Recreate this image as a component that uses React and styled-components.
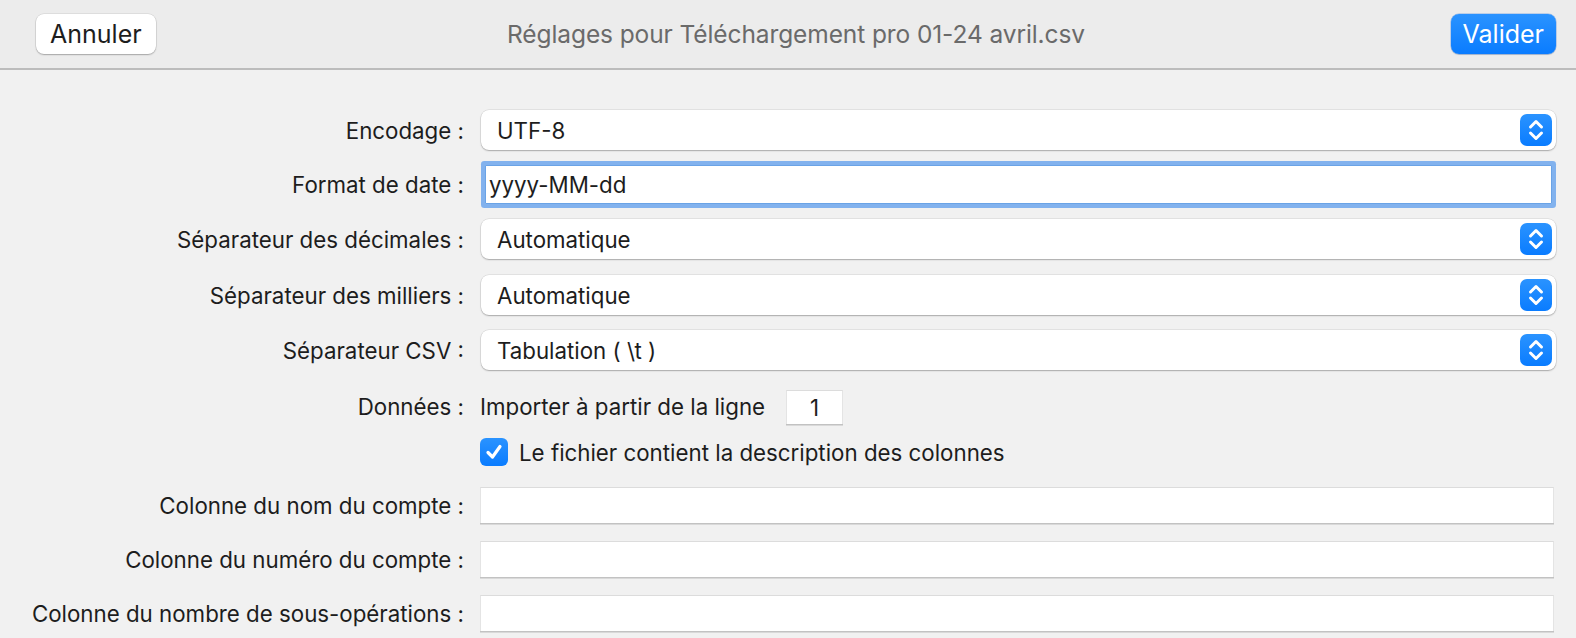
import React from 'react'
import styled, { createGlobalStyle } from 'styled-components'

const GlobalStyle = createGlobalStyle`
  html, body {
    margin: 0;
    padding: 0;
    background: #f1f1f1;
    font-family: Inter, "Noto Sans", "Liberation Sans", sans-serif;
    color: #1d1d1d;
  }
`

const Window = styled.div`
  width: 100%;
  height: 100vh;
  overflow: hidden;
  background: #f1f1f1;
`

const Header = styled.header`
  height: 70px;
  box-sizing: border-box;
  display: grid;
  grid-template-columns: 1fr auto 1fr;
  align-items: center;
  padding: 0 20px 0 36px;
  background: #ececec;
  border-bottom: 2px solid #bcbcbc;
`

const Title = styled.div`
  font-size: 24.5px;
  color: #6a6a6a;
  letter-spacing: -0.1px;
`

const Button = styled.button`
  height: 40px;
  padding: 0 ${p => (p.$primary ? 12 : 14)}px;
  border: none;
  border-radius: 8px;
  font-family: inherit;
  font-size: 25px;
  justify-self: ${p => (p.$primary ? 'end' : 'start')};
  color: ${p => (p.$primary ? '#fff' : '#1d1d1d')};
  background: ${p => (p.$primary ? 'linear-gradient(#2a93ff, #0a7cff)' : '#fff')};
  box-shadow: ${p =>
    p.$primary
      ? '0 0 0 0.5px rgba(0,90,220,0.4), 0 1px 1px rgba(0,0,0,0.15)'
      : '0 0 0 0.5px rgba(0,0,0,0.12), 0 1px 1.5px rgba(0,0,0,0.25)'};
`

const Form = styled.div`
  display: flex;
  flex-direction: column;
  padding: 40px 20px 0 0;
`

const Row = styled.div`
  display: grid;
  grid-template-columns: 464px 1fr;
  column-gap: 16px;
  align-items: center;
  height: ${p => p.$h}px;
  margin-top: ${p => p.$mt || 0}px;
`

const Label = styled.div`
  font-size: 22.3px;
  text-align: right;
  white-space: nowrap;
`

const Select = styled.div`
  height: 40px;
  margin-left: 1px;
  display: flex;
  align-items: center;
  justify-content: space-between;
  padding: 0 4px 0 16px;
  background: #fff;
  border-radius: 8px;
  font-size: 22.3px;
  box-shadow: 0 0 0 0.5px rgba(0,0,0,0.12), 0 1px 1.5px rgba(0,0,0,0.25);
`

const Stepper = styled.span`
  width: 32px;
  height: 32px;
  border-radius: 7px;
  background: linear-gradient(#2a93ff, #0a7cff);
  display: flex;
  align-items: center;
  justify-content: center;
`

const FocusInput = styled.div`
  height: 37px;
  margin: 0 4px 0 5px;
  display: flex;
  align-items: center;
  padding-left: 3px;
  background: #fff;
  font-size: 22.3px;
  border: 1px solid #6aa3e6;
  box-shadow: 0 0 0 4px #82b2ee;
  border-radius: 1px;
`

const TextInput = styled.div`
  height: 36px;
  box-sizing: border-box;
  margin-right: 2px;
  background: #fff;
  border-top: 1px solid #dcdcdc;
  border-left: 1px solid #e4e4e4;
  border-right: 1px solid #e4e4e4;
  box-shadow: 0 1.5px 0 #c2c2c2;
`

const Inline = styled.div`
  display: flex;
  align-items: center;
  gap: 21px;
  font-size: 22.3px;
`

const NumberBox = styled.div`
  width: 57px;
  height: 34px;
  box-sizing: border-box;
  background: #fff;
  display: flex;
  align-items: center;
  justify-content: center;
  font-size: 22.3px;
  border-top: 1px solid #dcdcdc;
  border-left: 1px solid #e4e4e4;
  border-right: 1px solid #e4e4e4;
  box-shadow: 0 1.5px 0 #c2c2c2;
`

const CheckRow = styled.label`
  display: flex;
  align-items: center;
  gap: 11px;
  font-size: 22.3px;
`

const CheckBox = styled.span`
  width: 28px;
  height: 28px;
  border-radius: 6px;
  background: linear-gradient(#2a93ff, #0a7cff);
  display: flex;
  align-items: center;
  justify-content: center;
`

const StepperIcon = () => (
  <Stepper>
    <svg width="20" height="26" viewBox="0 0 20 26" fill="none" stroke="#fff" strokeWidth="3" strokeLinecap="round" strokeLinejoin="round">
      <path d="M4.5 10 L10 4.5 L15.5 10" />
      <path d="M4.5 16 L10 21.5 L15.5 16" />
    </svg>
  </Stepper>
)

const SelectRow = ({ label, value, mt }) => (
  <Row $h={40} $mt={mt}>
    <Label>{label}</Label>
    <Select>
      {value}
      <StepperIcon />
    </Select>
  </Row>
)

const FieldRow = ({ label, mt }) => (
  <Row $h={36} $mt={mt}>
    <Label>{label}</Label>
    <TextInput />
  </Row>
)

const App = () => (
  <Window>
    <GlobalStyle />
    <Header>
      <Button>Annuler</Button>
      <Title>Réglages pour Téléchargement pro 01-24 avril.csv</Title>
      <Button $primary>Valider</Button>
    </Header>
    <Form>
      <SelectRow label="Encodage :" value="UTF-8" mt={0} />
      <Row $h={45} $mt={12}>
        <Label>Format de date :</Label>
        <FocusInput>yyyy-MM-dd</FocusInput>
      </Row>
      <SelectRow label="Séparateur des décimales :" value="Automatique" mt={12} />
      <SelectRow label="Séparateur des milliers :" value="Automatique" mt={16} />
      <SelectRow label="Séparateur CSV :" value="Tabulation ( \t )" mt={15} />
      <Row $h={35} $mt={19}>
        <Label>Données :</Label>
        <Inline>
          Importer à partir de la ligne
          <NumberBox>1</NumberBox>
        </Inline>
      </Row>
      <Row $h={28} $mt={14}>
        <span />
        <CheckRow>
          <CheckBox>
            <svg width="20" height="20" viewBox="0 0 20 20" fill="none" stroke="#fff" strokeWidth="3.2" strokeLinecap="round" strokeLinejoin="round">
              <path d="M4 10.5 L8.5 15 L16 4.5" />
            </svg>
          </CheckBox>
          Le fichier contient la description des colonnes
        </CheckRow>
      </Row>
      <FieldRow label="Colonne du nom du compte :" mt={21} />
      <FieldRow label="Colonne du numéro du compte :" mt={18} />
      <FieldRow label="Colonne du nombre de sous-opérations :" mt={18} />
    </Form>
  </Window>
)

export default App
